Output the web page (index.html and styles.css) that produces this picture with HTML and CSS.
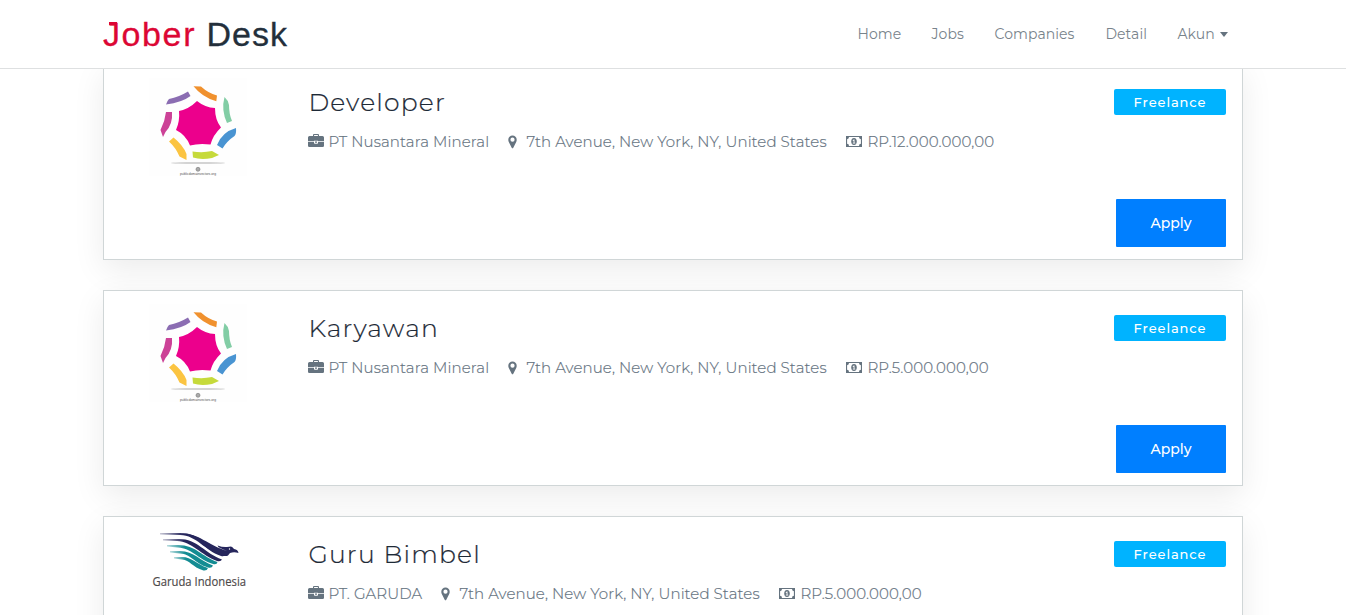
FILE: index.html
```html
<!DOCTYPE html>
<html lang="id">
<head>
<meta charset="utf-8">
<title>Jober Desk</title>
<link rel="stylesheet" href="styles.css">
</head>
<body>
<svg class="sprite" aria-hidden="true">
  <symbol id="briefcase" viewBox="0 0 16 14"><path fill-rule="evenodd" d="M5 2V1Q5 0 6 0H10Q11 0 11 1V2H14.500Q16 2 16 3.500V7.300H10V6.700H6V7.300H0V3.500Q0 2 1.500 2ZM6.100 1.100V2H9.900V1.100ZM0 8.100H6V9Q6 9.800 6.800 9.800H9.200Q10 9.800 10 9V8.100H16V11.700Q16 13 14.700 13H1.300Q0 13 0 11.700ZM7 7.400H9V8.800H7Z"/></symbol>
  <symbol id="pin" viewBox="0 0 9 14"><path fill-rule="evenodd" d="M4.500 .5A4.200 4.200 0 0 1 8.700 4.700Q8.700 5.900 8.200 6.900L5.300 12.700Q4.500 13.900 3.700 12.700L.8 6.900Q.3 5.900 .3 4.700A4.200 4.200 0 0 1 4.500 .5ZM4.500 2.600A2.100 2.100 0 1 0 4.500 6.800A2.100 2.100 0 1 0 4.500 2.600Z"/></symbol>
  <symbol id="money" viewBox="0 0 16 11"><path fill-rule="evenodd" d="M0 0H16V11H0ZM3 1.100Q3 3.100 1.100 3.200V7.800Q3 7.900 3 9.900H13Q13 7.900 14.900 7.800V3.200Q13 3.100 13 1.100Z"/><path fill-rule="evenodd" d="M8 2C9.900 2 10.800 3.600 10.800 5.500S9.900 9 8 9 5.200 7.400 5.200 5.500 6.100 2 8 2ZM7.700 3.400L6.600 4.400 7 5 7.600 4.700V6.800H6.800V7.600H9.300V6.800H8.500V3.400Z"/></symbol>
  <symbol id="star" viewBox="0 0 120 110">
    <path fill="#fefefe" d="M9 3h98v98H9z"/>
    <path fill="#ec008c" d="M57 26Q65 32.500 75 33Q75 45 81 52.500Q73 60 70.500 69.500Q59 68 50 70.500Q46 60 36 55Q40 46 39 36Q49 34 57 26Z"/>
    <path fill="#8b6db2" d="M26 29.500Q27 26 29 24Q39 22 48 16.500L50.500 21Q42 27.500 26 29.500Z"/>
    <path fill="#f0912e" d="M53.500 11.200L61 11.500Q68 18 77 20.500L76.300 26.300Q62 22 53.500 11.200Z"/>
    <path fill="#82cda5" d="M84.500 22Q88 25 89 30Q89 39 92 46L87 48Q81 35 84.500 22Z"/>
    <path fill="#4994d2" d="M96 53Q96.500 59 94.500 61Q87 66 82.500 73.500L77 70Q82 57 96 53Z"/>
    <path fill="#c6da3b" d="M52.500 76.500Q63 78 72 76L79 80L72 83Q61 85 53 82.500Z"/>
    <path fill="#fbc441" d="M33.500 62.500Q43 70 46.500 79V85L39.500 81.500Q36 73 29 66.500Z"/>
    <path fill="#cc4297" d="M26 37H32Q33 49 25.500 57L23 62L20.500 55Q25 46 26 37Z"/>
    <ellipse class="star-shadow" cx="58" cy="88" rx="27" ry="1"/>
    <circle class="star-mark" cx="58" cy="94.300" r="2"/>
  </symbol>
  <linearGradient id="navy"><stop offset="0" stop-color="#26265c" stop-opacity=".25"/><stop offset=".35" stop-color="#26265c"/></linearGradient>
  <linearGradient id="teal"><stop offset="0" stop-color="#148c93" stop-opacity=".3"/><stop offset=".35" stop-color="#148c93"/></linearGradient>
</svg>

<header class="topbar">
  <div class="wrap topbar-row">
    <a class="brand"><span class="brand-accent">Jober</span> Desk</a>
    <nav class="nav">
      <a class="nav-home">Home</a><a class="nav-jobs">Jobs</a><a class="nav-companies">Companies</a><a class="nav-detail">Detail</a><a class="nav-akun">Akun<i class="caret"></i></a>
    </nav>
  </div>
</header>

<main class="jobs">
  <article class="job">
    <svg class="logo" viewBox="0 0 120 110"><use href="#star"/><text class="star-text" x="40" y="100.300" textLength="36" lengthAdjust="spacingAndGlyphs">publicdomainvectors.org</text></svg>
    <div class="info">
      <h2>Developer</h2>
      <div class="meta">
        <span class="company"><svg class="i-case"><use href="#briefcase"/></svg><span>PT Nusantara Mineral</span></span>
        <span class="place"><svg class="i-pin"><use href="#pin"/></svg><span>7th Avenue, New York, NY, United States</span></span>
        <span class="pay"><svg class="i-money"><use href="#money"/></svg><span>RP.12.000.000,00</span></span>
      </div>
    </div>
    <div class="side"><span class="tag">Freelance</span><a class="apply">Apply</a></div>
  </article>
  <article class="job">
    <svg class="logo" viewBox="0 0 120 110"><use href="#star"/><text class="star-text" x="40" y="100.300" textLength="36" lengthAdjust="spacingAndGlyphs">publicdomainvectors.org</text></svg>
    <div class="info">
      <h2>Karyawan</h2>
      <div class="meta">
        <span class="company"><svg class="i-case"><use href="#briefcase"/></svg><span>PT Nusantara Mineral</span></span>
        <span class="place"><svg class="i-pin"><use href="#pin"/></svg><span>7th Avenue, New York, NY, United States</span></span>
        <span class="pay"><svg class="i-money"><use href="#money"/></svg><span>RP.5.000.000,00</span></span>
      </div>
    </div>
    <div class="side"><span class="tag">Freelance</span><a class="apply">Apply</a></div>
  </article>
  <article class="job">
    <svg class="logo logo-garuda" viewBox="0 0 120 80">
      <path fill="url(#navy)" d="M20 13H40C60 13 69 28 86 34Q85 37 81 36C64 30 57 15.500 40 15L20 14.500Z"/>
      <path fill="url(#navy)" d="M23 19H37C57 18 64 33 82 39.500Q81 42 77 41C61 35 52 21.500 37 21L23 20.500Z"/>
      <path fill="url(#teal)" d="M27 25H38C56 25 62 37 77.500 42Q77 45 73 44C58 39 51 28 38 27.500L27 26.500Z"/>
      <path fill="url(#teal)" d="M30 31H40C54 31 60 41 73 45.500Q72 48.500 68 47.500C54 43 51 34 40 33.500L30 32.500Z"/>
      <path fill="url(#teal)" d="M34 37H42C52 37 56 44 68 48Q67 51 63.500 50.500C52 47 50 40 42 39.500L34 38.500Z"/>
      <path fill="#26265c" d="M42 13.200C58 13 68 25 87 31L80 28Q78 27 77.500 25.500Q83 27.500 87 27L91 26.500Q93 27 94 29Q98 29.500 98.500 33Q94 31.500 90 33L88 35.500Q86 36.500 83 35.500Q66 30 57 19Q50 14 42 13.200Z"/>
      <circle fill="#fff" cx="89.500" cy="29" r=".7"/>
      <text class="garuda-text" x="12.500" y="65.500" textLength="93.500" lengthAdjust="spacingAndGlyphs">Garuda Indonesia</text>
    </svg>
    <div class="info">
      <h2>Guru Bimbel</h2>
      <div class="meta">
        <span class="company company-short"><svg class="i-case"><use href="#briefcase"/></svg><span>PT. GARUDA</span></span>
        <span class="place"><svg class="i-pin"><use href="#pin"/></svg><span>7th Avenue, New York, NY, United States</span></span>
        <span class="pay"><svg class="i-money"><use href="#money"/></svg><span>RP.5.000.000,00</span></span>
      </div>
    </div>
    <div class="side"><span class="tag">Freelance</span></div>
  </article>
</main>
</body>
</html>
```
FILE: styles.css
```css
* { box-sizing: border-box; }
body { margin: 0; background: #fff; color: #65737f; font-family: Montserrat, Inter, sans-serif; font-weight: 300; }
.sprite { position: absolute; width: 0; height: 0; }
.wrap { width: 1140px; margin: 0 auto; }
.topbar { position: fixed; top: 0; left: 0; right: 0; z-index: 2; height: 69px; background: #fff; border-bottom: 1px solid #dee0e1; }
.topbar-row { display: flex; justify-content: space-between; height: 68px; align-items: center; }
.brand { position: relative; font: 400 34px/68px "Liberation Sans", Arial, sans-serif; letter-spacing: 1px; color: #232f3b; -webkit-text-stroke: .3px currentColor; white-space: nowrap; }
.brand-accent { color: #dc0734; letter-spacing: 1.600px; }
.brand::before { content: ""; position: absolute; left: 6px; top: 22px; width: 8px; height: 3px; background: #dc0734; }
.nav { display: flex; width: 385.500px; font-size: 14px; font-weight: 400; line-height: 68px; letter-spacing: .05px; color: #78838b; white-space: nowrap; }
.nav-home { width: 74px; }
.nav-jobs { width: 63px; }
.nav-companies { width: 111px; }
.nav-detail { width: 72px; }
.nav-akun { display: flex; align-items: center; gap: 5px; }
.caret { border: 4.500px solid transparent; border-top: 5px solid #65737f; border-bottom: 0; }
.jobs { height: 615px; overflow: hidden; padding: 64px 103px 0; display: flex; flex-direction: column; gap: 30px; }
.job { display: flex; flex: none; height: 196px; background: #fff; border: 1px solid #d0d6d7; box-shadow: 0 10px 30px rgba(0,0,0,.08); }
.logo { width: 120px; height: 110px; margin: 10px 48px 0 36px; flex: none; }
.logo-garuda { height: 80px; margin-top: 3px; }
.star-shadow { fill: #aaa; opacity: .5; }
.star-mark { fill: #aaa; stroke: #777; stroke-width: .6px; }
.star-text { font: 3.500px "Liberation Sans", sans-serif; fill: #555; }
.garuda-text { font: 12.500px "Open Sans", sans-serif; fill: #4c4849; stroke: #4c4849; stroke-width: .15px; }
.info { flex: 1; padding: 21px 0 0 .4px; }
h2 { margin: 0; font-size: 25px; line-height: 32px; font-weight: 300; color: #1d2936; letter-spacing: 1.200px; -webkit-text-stroke: .2px currentColor; }
.meta { display: flex; margin-top: 14px; font-size: 15px; line-height: 20px; letter-spacing: .120px; white-space: nowrap; -webkit-text-stroke: .2px currentColor; }
.meta > span { display: flex; align-items: center; }
.meta svg { fill: #65737f; flex: none; }
.company { width: 200px; }
.company-short { width: 133px; }
.place { width: 338px; }
.i-case { width: 16px; height: 14px; margin: -2px 4px 0 0; }
.i-pin { width: 9px; height: 14px; margin-right: 9px; }
.i-money { width: 16px; height: 11px; margin: -1px 5px 0 0; }
.side { width: 130px; padding: 24px 16px 12px 0; display: flex; flex-direction: column; justify-content: space-between; align-items: flex-end; }
.tag { width: 112px; height: 26px; border-radius: 2px; background: #00b3ff; color: #fff; font-size: 13px; font-weight: 500; line-height: 26px; letter-spacing: .9px; text-align: center; }
.apply { width: 110px; height: 48px; border-radius: 1px; background: #007fff; color: #fff; font-size: 14px; font-weight: 500; line-height: 48px; text-align: center; }
```
